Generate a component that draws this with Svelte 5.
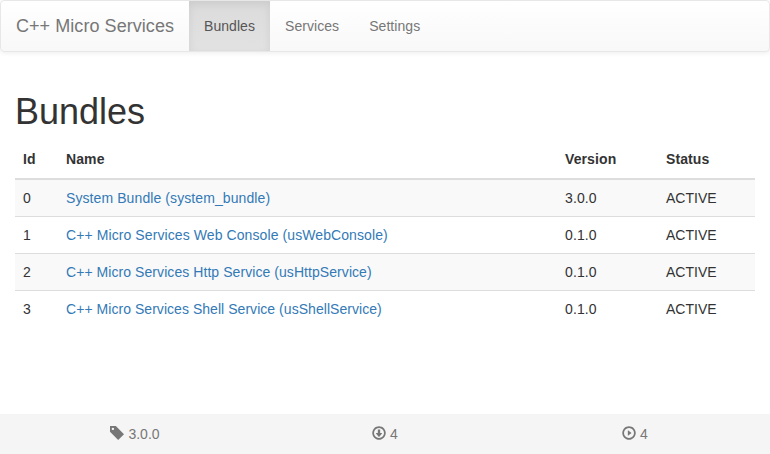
<script>
  const links = ['Bundles', 'Services', 'Settings'];
  const bundles = [
    { id: 0, name: 'System Bundle (system_bundle)', version: '3.0.0', status: 'ACTIVE' },
    { id: 1, name: 'C++ Micro Services Web Console (usWebConsole)', version: '0.1.0', status: 'ACTIVE' },
    { id: 2, name: 'C++ Micro Services Http Service (usHttpService)', version: '0.1.0', status: 'ACTIVE' },
    { id: 3, name: 'C++ Micro Services Shell Service (usShellService)', version: '0.1.0', status: 'ACTIVE' }
  ];
  const ring = 'M600 1177q117 0 224 -45.5t184.5 -123t123 -184.5t45.5 -224t-45.5 -224t-123 -184.5t-184.5 -123t-224 -45.5t-224 45.5t-184.5 123t-123 184.5t-45.5 224t45.5 224t123 184.5t184.5 123t224 45.5zM600 1027q-116 0 -214.5 -57t-155.5 -155.5t-57 -214.5t57 -214.5t155.5 -155.5t214.5 -57t214.5 57t155.5 155.5t57 214.5t-57 214.5t-155.5 155.5t-214.5 57z';
  const stats = [
    { icon: 'M1 700v475q0 10 7.5 17.5t17.5 7.5h474l700 -700l-500 -500zM148 953q0 -42 29 -71q30 -30 71.5 -30t71.5 30q29 29 29 71t-29 71q-30 30 -71.5 30t-71.5 -30q-29 -29 -29 -71z', text: '3.0.0' },
    { icon: ring + 'M700 600h137q21 0 26 -11.5t-8 -27.5l-223 -275q-13 -16 -32 -16t-32 16l-223 275q-13 16 -8 27.5t26 11.5h137v275q0 10 7.5 17.5t17.5 7.5h150q10 0 17.5 -7.5t7.5 -17.5v-275z', text: '4' },
    { icon: ring + 'M540 820l253 -190q17 -12 17 -30t-17 -30l-253 -190q-16 -12 -28 -6.5t-12 26.5v400q0 21 12 26.5t28 -6.5z', text: '4' }
  ];
</script>

<div class="page">
  <nav>
    <a class="brand" href="#home">C++ Micro Services</a>
    {#each links as link, i}
      <a class="link" class:active={i === 0} href="#{link}">{link}</a>
    {/each}
  </nav>
  <main>
    <h1>Bundles</h1>
    <table>
      <colgroup><col class="c1" /><col class="c2" /><col class="c3" /><col /></colgroup>
      <thead><tr><th>Id</th><th>Name</th><th>Version</th><th>Status</th></tr></thead>
      <tbody>
        {#each bundles as b}
          <tr><td>{b.id}</td><td><a href="#{b.id}">{b.name}</a></td><td class="version">{b.version}</td><td>{b.status}</td></tr>
        {/each}
      </tbody>
    </table>
  </main>
  <footer>
    {#each stats as stat}
      <div>
        <svg viewBox="0 0 1200 1200"><path fill-rule="evenodd" transform="matrix(1 0 0 -1 0 1200)" d={stat.icon} /></svg>
        <span>{stat.text}</span>
      </div>
    {/each}
  </footer>
</div>

<style>
  :global(body) { margin: 0; background: #fff; }
  .page {
    display: flex; flex-direction: column; height: 454px;
    font: 14px/20px "Liberation Sans", Arial, sans-serif; color: #333;
  }
  .page, .page * { box-sizing: border-box; }
  a { text-decoration: none; }
  nav {
    display: flex; flex: none; height: 52px;
    border: 1px solid #e7e7e7; border-radius: 4px;
    background: linear-gradient(#fff, #f8f8f8);
    box-shadow: inset 0 1px 0 rgba(255,255,255,.15), 0 1px 5px rgba(0,0,0,.075);
  }
  .brand { width: 188px; padding: 15px; font-size: 18px; letter-spacing: .055px; white-space: nowrap; color: #777; }
  .link { padding: 15px; letter-spacing: .06px; color: #777; }
  .active {
    width: 81px; color: #555; background: linear-gradient(#dbdbdb, #e2e2e2);
    box-shadow: inset 0 3px 9px rgba(0,0,0,.075);
  }
  main { flex: 1; padding: 0 15px; }
  h1 { margin: 40px 0 10px; font-size: 36px; line-height: 39px; font-weight: 500; }
  table { width: 100%; table-layout: fixed; border-collapse: separate; border-spacing: 0; }
  .c1 { width: 43px; }
  .c2 { width: 499px; }
  .c3 { width: 101px; }
  th, td { padding: 8px; text-align: left; }
  th { padding-bottom: 9px; border-bottom: 2px solid #ddd; letter-spacing: .1px; }
  td { border-top: 1px solid #ddd; }
  tbody tr:first-child td { border-top: 0; }
  tbody tr:nth-child(odd) { background: #f9f9f9; }
  td a { color: #337ab7; letter-spacing: .09px; }
  tr:nth-child(3) a { letter-spacing: .065px; }
  tr:nth-child(4) a { letter-spacing: .045px; }
  .version { letter-spacing: .1px; }
  footer { display: flex; flex: none; height: 40px; padding: 0 10px; background: #f5f5f5; color: #777; }
  footer div { flex: 1; display: flex; justify-content: center; gap: 4px; padding-top: 10px; }
  svg { width: 14px; height: 14px; margin-top: 2px; fill: #777; }
</style>
